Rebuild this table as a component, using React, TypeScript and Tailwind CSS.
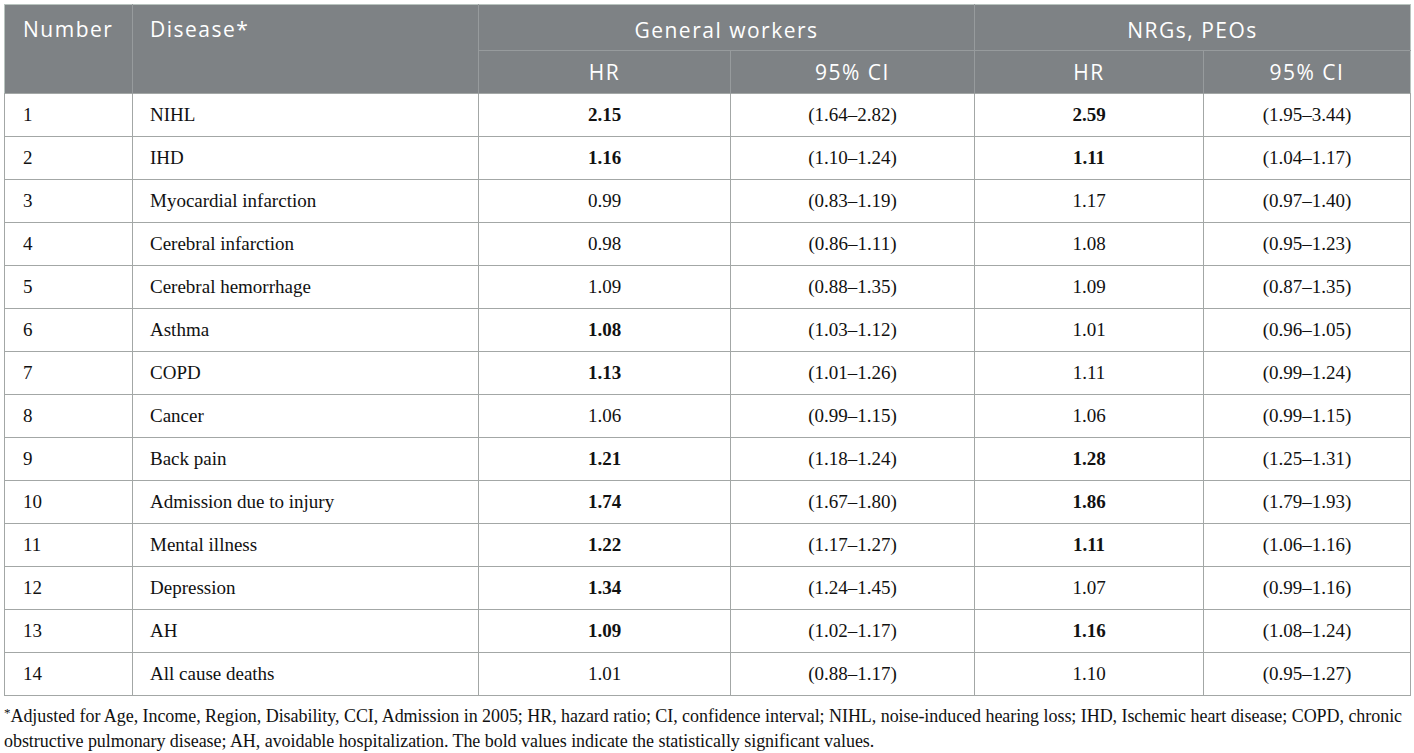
import React from "react";

type Row = [string, string, string, boolean, string, string, boolean, string];

const rows: Row[] = [
  ["1", "NIHL", "2.15", true, "(1.64–2.82)", "2.59", true, "(1.95–3.44)"],
  ["2", "IHD", "1.16", true, "(1.10–1.24)", "1.11", true, "(1.04–1.17)"],
  ["3", "Myocardial infarction", "0.99", false, "(0.83–1.19)", "1.17", false, "(0.97–1.40)"],
  ["4", "Cerebral infarction", "0.98", false, "(0.86–1.11)", "1.08", false, "(0.95–1.23)"],
  ["5", "Cerebral hemorrhage", "1.09", false, "(0.88–1.35)", "1.09", false, "(0.87–1.35)"],
  ["6", "Asthma", "1.08", true, "(1.03–1.12)", "1.01", false, "(0.96–1.05)"],
  ["7", "COPD", "1.13", true, "(1.01–1.26)", "1.11", false, "(0.99–1.24)"],
  ["8", "Cancer", "1.06", false, "(0.99–1.15)", "1.06", false, "(0.99–1.15)"],
  ["9", "Back pain", "1.21", true, "(1.18–1.24)", "1.28", true, "(1.25–1.31)"],
  ["10", "Admission due to injury", "1.74", true, "(1.67–1.80)", "1.86", true, "(1.79–1.93)"],
  ["11", "Mental illness", "1.22", true, "(1.17–1.27)", "1.11", true, "(1.06–1.16)"],
  ["12", "Depression", "1.34", true, "(1.24–1.45)", "1.07", false, "(0.99–1.16)"],
  ["13", "AH", "1.09", true, "(1.02–1.17)", "1.16", true, "(1.08–1.24)"],
  ["14", "All cause deaths", "1.01", false, "(0.88–1.17)", "1.10", false, "(0.95–1.27)"],
];

const sans = { fontFamily: '"Open Sans", "Liberation Sans", sans-serif' };
const serif = { fontFamily: '"Liberation Serif", "DejaVu Serif", serif' };

export default function App() {
  return (
    <div className="bg-white w-[1414px] h-[753px] overflow-hidden pt-[4px] pl-[4px]">
      <table className="border-collapse w-[1406px] table-fixed border border-[#b9c4bf]">
        <colgroup>
          <col className="w-[128px]" />
          <col className="w-[346px]" />
          <col className="w-[252px]" />
          <col className="w-[244px]" />
          <col className="w-[229px]" />
          <col className="w-[207px]" />
        </colgroup>
        <thead className="bg-[#7e8285] text-white text-[21px] leading-[28px]" style={sans}>
          <tr className="h-[46px]">
            <th rowSpan={2} className="align-top text-left font-normal pl-[18px] pt-[10px] border-r border-[#979b9d] tracking-[1.5px]">
              Number
            </th>
            <th rowSpan={2} className="align-top text-left font-normal pl-[17px] pt-[10px] border-r border-[#979b9d] tracking-[1.5px]">
              Disease*
            </th>
            <th colSpan={2} className="font-normal text-center pt-[4px] border-r border-b border-[#979b9d] tracking-[1.5px]">
              General workers
            </th>
            <th colSpan={2} className="font-normal text-center pt-[4px] border-b border-[#979b9d] tracking-[1.5px]">
              NRGs, PEOs
            </th>
          </tr>
          <tr className="h-[43px]">
            <th className="font-normal text-center border-r border-[#979b9d] tracking-[1.5px]">HR</th>
            <th className="font-normal text-center border-r border-[#979b9d] tracking-[1.5px]">95% CI</th>
            <th className="font-normal text-center border-r border-[#979b9d] tracking-[1.5px]">HR</th>
            <th className="font-normal text-center tracking-[1.5px]">95% CI</th>
          </tr>
        </thead>
        <tbody className="text-[19px] leading-[24px] text-[#111]" style={serif}>
          {rows.map((r) => (
            <tr key={r[0]} className="h-[43px]">
              <td className="border border-[#a3a7a6] pl-[18px]">{r[0]}</td>
              <td className="border border-[#a3a7a6] pl-[17px]">{r[1]}</td>
              <td className={`border border-[#a3a7a6] text-center ${r[3] ? "font-bold" : ""}`}>{r[2]}</td>
              <td className="border border-[#a3a7a6] text-center">{r[4]}</td>
              <td className={`border border-[#a3a7a6] text-center ${r[6] ? "font-bold" : ""}`}>{r[5]}</td>
              <td className="border border-[#a3a7a6] text-center">{r[7]}</td>
            </tr>
          ))}
        </tbody>
      </table>
      <div className="text-[18px] leading-[25px] text-[#111] pt-[4px] tracking-[-0.05px]" style={serif}>
        <div className="whitespace-nowrap">
          <span className="text-[13px] align-[5px]">*</span>Adjusted for Age, Income, Region, Disability, CCI, Admission in 2005; HR, hazard ratio; CI, confidence interval; NIHL, noise-induced hearing loss; IHD, Ischemic heart disease; COPD, chronic
        </div>
        <div className="whitespace-nowrap">
          obstructive pulmonary disease; AH, avoidable hospitalization. The bold values indicate the statistically significant values.
        </div>
      </div>
    </div>
  );
}
